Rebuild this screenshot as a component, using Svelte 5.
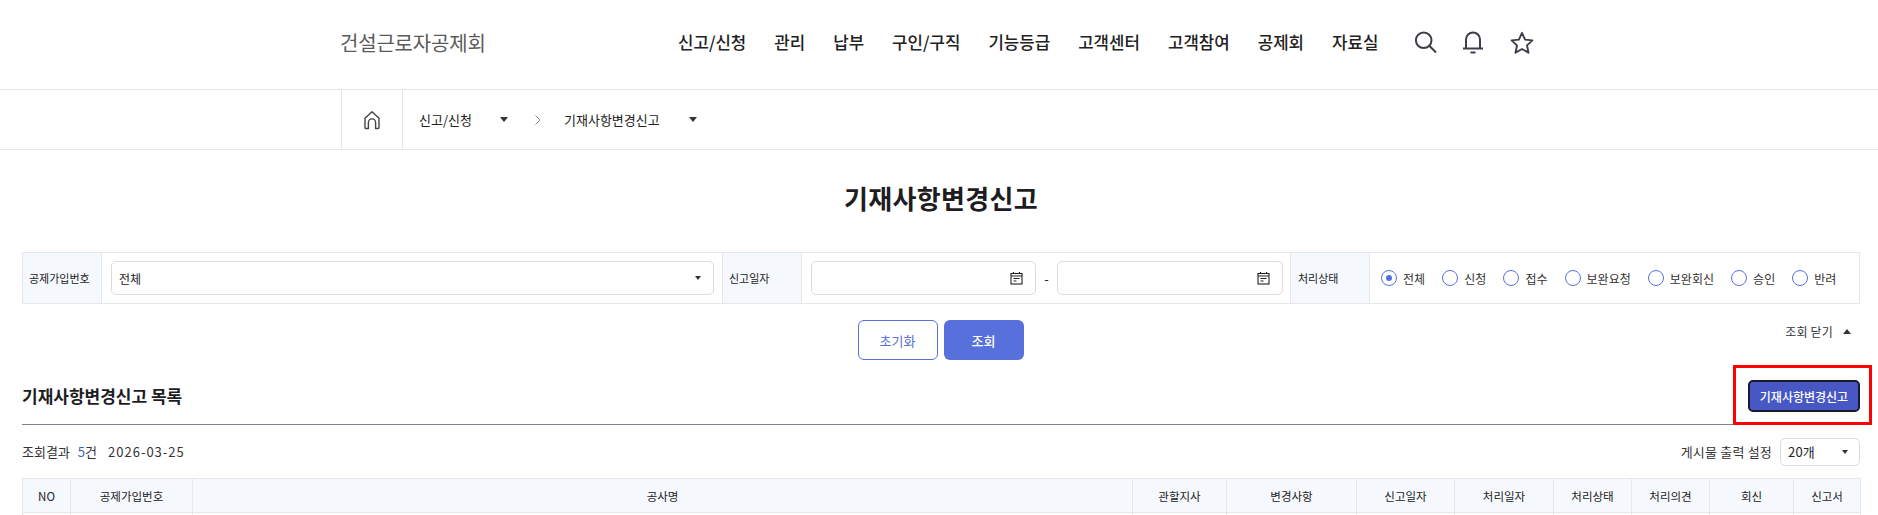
<script>
  const nav = ['신고/신청', '관리', '납부', '구인/구직', '기능등급', '고객센터', '고객참여', '공제회', '자료실'];
  const radios = ['전체', '신청', '접수', '보완요청', '보완회신', '승인', '반려'];
  const cols = [
    ['NO', 48], ['공제가입번호', 122], ['공사명', 940], ['관할지사', 94], ['변경사항', 130],
    ['신고일자', 98], ['처리일자', 99], ['처리상태', 78], ['처리의견', 78], ['회신', 84], ['신고서', 67]
  ];
</script>

<div class="page">
  <header class="top">
    <div class="logo">건설근로자공제회</div>
    <nav class="nav">
      {#each nav as n}<span>{n}</span>{/each}
    </nav>
    <div class="icons">
      <svg width="26" height="26" viewBox="0 0 26 26" fill="none" stroke="#3c3f48" stroke-width="2"><circle cx="10.7" cy="10.2" r="7.8"/><path d="M16.3 15.8 23 22.5"/></svg>
      <svg width="24" height="26" viewBox="0 0 24 26" fill="none" stroke="#3c3f48" stroke-width="2"><path d="M4 18.500V9.500a7 7 0 0 1 14 0V18.500"/><path d="M1 18.500h20"/><path d="M8.500 22.500h5"/></svg>
      <svg width="26" height="26" viewBox="0 0 26 26" fill="none" stroke="#3c3f48" stroke-width="1.9" stroke-linejoin="round"><path d="M13 2.800l3.100 6.800 7.300.8-5.400 5 1.500 7.300-6.500-3.700-6.500 3.700 1.500-7.300-5.400-5 7.300-.8z"/></svg>
    </div>
  </header>

  <div class="crumbs">
    <div class="home">
      <svg width="18" height="20" viewBox="0 0 18 20" fill="none" stroke="#444" stroke-width="1.4" stroke-linejoin="round"><path d="M2 17.500V8.200L9 1.800l7 6.400v9.300a1 1 0 0 1-1 1h-2.400v-6a3.600 3.600 0 0 0-7.200 0v6H3a1 1 0 0 1-1-1z"/></svg>
    </div>
    <span class="c1">신고/신청</span>
    <i class="caret c-a"></i>
    <svg class="chev" width="8" height="12" viewBox="0 0 8 12" fill="none" stroke="#888" stroke-width="1"><path d="M1.500 1.500 6 6l-4.500 4.500"/></svg>
    <span class="c2">기재사항변경신고</span>
    <i class="caret c-b"></i>
  </div>

  <h1>기재사항변경신고</h1>

  <section class="search">
    <div class="lab l1">공제가입번호</div>
    <div class="cell sel-cell">
      <div class="field select"><span>전체</span><i class="mini"></i></div>
    </div>
    <div class="lab l2">신고일자</div>
    <div class="cell date-cell">
      <div class="field date">
        <svg width="13" height="14" viewBox="0 0 13 14" fill="none" stroke="#222" stroke-width="1.1"><rect x="1" y="2.500" width="11" height="10.500"/><path d="M1 5h11M3.500 1v2M9.500 1v2M3.500 7.500h6M3.500 10h3"/></svg>
      </div>
      <span class="dash">-</span>
      <div class="field date d2">
        <svg width="13" height="14" viewBox="0 0 13 14" fill="none" stroke="#222" stroke-width="1.1"><rect x="1" y="2.500" width="11" height="10.500"/><path d="M1 5h11M3.500 1v2M9.500 1v2M3.500 7.500h6M3.500 10h3"/></svg>
      </div>
    </div>
    <div class="lab l3">처리상태</div>
    <div class="cell radios">
      {#each radios as r, i}
        <label class="radio"><i class:on={i === 0}></i><span>{r}</span></label>
      {/each}
    </div>
  </section>

  <div class="actions">
    <button class="btn ghost">초기화</button>
    <button class="btn solid">조회</button>
    <div class="fold">조회 닫기 <i class="up"></i></div>
  </div>

  <div class="list-head">
    <h2>기재사항변경신고 목록</h2>
    <button class="add">기재사항변경신고</button>
    <div class="redbox"></div>
  </div>

  <div class="result">
    <div class="count">조회결과 <span class="gap"><b>5</b>건</span> <span class="gap2">2026-03-25</span></div>
    <div class="per">
      <span>게시물 출력 설정</span>
      <div class="field per-sel"><span>20개</span><i class="mini"></i></div>
    </div>
  </div>

  <table>
    <colgroup>{#each cols as c}<col style="width:{c[1]}px" />{/each}</colgroup>
    <thead><tr>{#each cols as c}<th>{c[0]}</th>{/each}</tr></thead>
    <tbody><tr>{#each cols as c}<td></td>{/each}</tr></tbody>
  </table>
</div>

<style>
  :global(body) { margin: 0; background: #fff; overflow: hidden; }
  .page {
    width: 1878px; height: 515px; overflow: hidden;
    font-family: "Noto Sans CJK KR", "Noto Sans", sans-serif;
    color: #222; font-size: 12px;
  }
  .top {
    height: 85px; padding-bottom: 4px; box-sizing: content-box; border-bottom: 1px solid #e6e6e6;
    display: flex; align-items: center; padding-left: 340px;
  }
  .logo { width: 338px; font-size: 20px; color: #5a5a5a; font-weight: 400; letter-spacing: -0.2px; line-height: 1; }
  .nav { display: flex; gap: 28px; font-size: 16.800px; font-weight: 500; color: #222; line-height: 1; }
  .icons { display: flex; align-items: center; margin-left: 35px; gap: 23px; }
  .icons svg { display: block; }

  .crumbs {
    height: 59px; border-bottom: 1px solid #e6e6e6; padding-left: 341px;
    display: flex; align-items: center; font-size: 13px; color: #222;
  }
  .home {
    width: 60px; height: 59px; border-left: 1px solid #e6e6e6; border-right: 1px solid #e6e6e6;
    display: flex; align-items: center; justify-content: center;
  }
  .c1 { margin-left: 16px; width: 52px; white-space: nowrap; }
  .caret { width: 0; height: 0; border-left: 4px solid transparent; border-right: 4px solid transparent; border-top: 5px solid #333; }
  .c-a { margin-left: 29px; }
  .chev { margin-left: 26px; }
  .c2 { margin-left: 22px; width: 96px; white-space: nowrap; }
  .c-b { margin-left: 29px; }

  h1 {
    margin: 0; height: 100px; box-sizing: border-box; padding-left: 4px;
    font-size: 26px; letter-spacing: 0.3px; font-weight: 700; text-align: center; color: #1d1d1f; line-height: 96px;
  }

  .search {
    margin: 2px 18px 0 22px; height: 52px; box-sizing: border-box;
    border: 1px solid #e5e7ea; display: flex;
  }
  .lab {
    background: #f5f8fd; display: flex; align-items: center; font-size: 11px; color: #222;
    padding-left: 6px; box-sizing: border-box; flex: none;
  }
  .l1 { width: 79px; border-right: 1px solid #e5e7ea; }
  .l2 { width: 80px; border-left: 1px solid #e5e7ea; border-right: 1px solid #e5e7ea; margin-left: 8px; }
  .l3 { width: 80px; border-left: 1px solid #e5e7ea; border-right: 1px solid #e5e7ea; margin-left: 7px; padding-left: 7px; }
  .cell { display: flex; align-items: center; flex: none; }
  .sel-cell { padding-left: 9px; }
  .field {
    box-sizing: border-box; border: 1px solid #dcdcdc; border-radius: 5px; background: #fff;
    display: flex; align-items: center; height: 34px;
  }
  .select { width: 603px; padding: 0 12px 0 7px; justify-content: space-between; font-size: 12px; }
  .mini { width: 0; height: 0; border-left: 3px solid transparent; border-right: 3px solid transparent; border-top: 4px solid #333; }
  .date-cell { padding-left: 9px; }
  .date { width: 225px; justify-content: flex-end; padding-right: 12px; }
  .d2 { width: 226px; }
  .dash { width: 21px; text-align: center; font-size: 13px; }
  .radios { padding-left: 11px; gap: 17.100px; }
  .radio { display: flex; align-items: center; font-size: 12px; color: #333; gap: 6px; }
  .radio i {
    width: 16px; height: 16px; box-sizing: border-box; border: 1px solid #5870dc; border-radius: 50%;
    display: flex; align-items: center; justify-content: center;
  }
  .radio i.on::after { content: ""; width: 6px; height: 6px; border-radius: 50%; background: #5870dc; }

  .actions { position: relative; display: flex; justify-content: center; gap: 6px; margin-top: 16px; height: 40px; padding-left: 3px; }
  .btn { width: 80px; height: 40px; border-radius: 6px; font: inherit; font-size: 13px; box-sizing: border-box; padding: 0; }
  .ghost { background: #fff; border: 1px solid #5870dc; color: #5870dc; }
  .solid { background: #5870dc; border: 0; color: #fff; font-weight: 500; }
  .fold {
    position: absolute; right: 27px; top: 3px; font-size: 12px; letter-spacing: 0.2px; color: #333;
    display: flex; align-items: center; gap: 10px;
  }
  .up { width: 0; height: 0; border-left: 4px solid transparent; border-right: 4px solid transparent; border-bottom: 5px solid #333; }

  .list-head {
    position: relative; margin: 0 18px 0 22px; height: 65px; box-sizing: border-box;
    border-bottom: 1px solid #7d8290; display: flex; justify-content: space-between; align-items: center;
    padding-top: 6px;
  }
  h2 { margin: 0; font-size: 17px; font-weight: 700; color: #1d1d1f; line-height: 1; }
  .add {
    width: 112px; height: 32px; align-self: flex-start; margin-top: 14px; box-sizing: border-box; padding: 0;
    background: #4758c5; color: #fff; border: 2px solid #181b2e; border-radius: 5px; font: inherit; font-size: 12px; font-weight: 500;
  }
  .redbox {
    position: absolute; right: -12px; top: 5px; width: 139px; height: 60px; box-sizing: border-box;
    border: 3px solid #ff0000; pointer-events: none;
  }

  .result {
    margin: 0 18px 0 22px; height: 53px; display: flex; justify-content: space-between; align-items: center;
    font-size: 13px; color: #333;
  }
  .count { display: flex; align-items: center; }
  .gap { margin-left: 8px; }
  .gap b { font-weight: 400; color: #3a62c9; }
  .gap2 { margin-left: 11px; letter-spacing: 1px; }
  .per { display: flex; align-items: center; gap: 8px; letter-spacing: 0.2px; }
  .per-sel { width: 80px; height: 28px; padding: 0 11px 0 7px; justify-content: space-between; color: #222; }

  table {
    margin-left: 22px; width: 1838px; border-collapse: collapse; table-layout: fixed;
  }
  th {
    height: 34px; padding: 0; background: #f5f8fd; border: 1px solid #e5e7ea;
    font-weight: 400; font-size: 11.500px; color: #222; box-sizing: border-box;
  }
  td { height: 40px; border: 1px solid #e5e7ea; }
</style>
